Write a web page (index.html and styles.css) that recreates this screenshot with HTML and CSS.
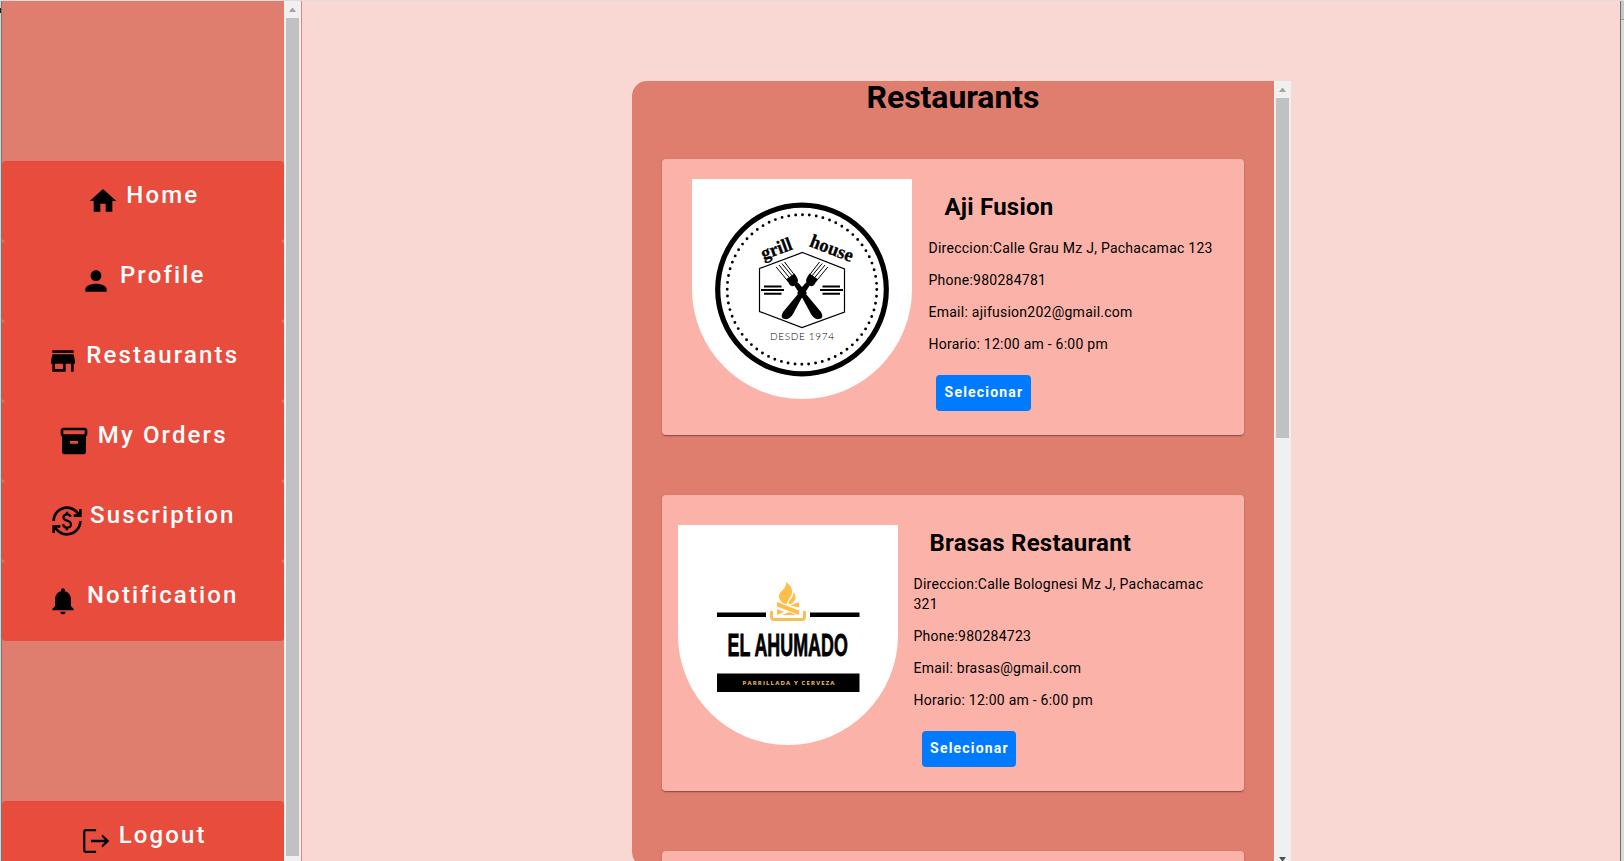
FILE: index.html
```html
<!DOCTYPE html>
<html lang="es">
<head>
<meta charset="utf-8">
<title>Restaurants</title>
<link rel="stylesheet" href="styles.css">
</head>
<body>
<div class="window">
  <div class="edge edge-left"><i class="speck"></i></div>
  <aside class="sidebar">
    <nav class="nav">
      <a class="nav-item"><svg class="icon" viewBox="0 0 24 24"><path d="M10 20v-6h4v6h5v-8h3L12 3 2 12h3v8z"/></svg><span class="label">Home</span></a>
      <a class="nav-item"><svg class="icon" viewBox="0 0 24 24"><path d="M12 12c2.21 0 4-1.79 4-4s-1.79-4-4-4-4 1.79-4 4 1.790 4 4 4zm0 2c-2.67 0-8 1.340-8 4v2h16v-2c0-2.660-5.330-4-8-4z"/></svg><span class="label">Profile</span></a>
      <a class="nav-item"><svg class="icon" viewBox="0 0 24 24"><path d="M20 4H4v2h16V4zm1 10v-2l-1-5H4l-1 5v2h1v6h10v-6h4v6h2v-6h1zm-9 4H6v-4h6v4z"/></svg><span class="label">Restaurants</span></a>
      <a class="nav-item"><svg class="icon" viewBox="0 0 24 24"><path d="M20 2H4c-1 0-2 .9-2 2v3.010c0 .72.43 1.340 1 1.690V20c0 1.100 1.100 2 2 2h14c.9 0 2-.9 2-2V8.700c.57-.35 1-.97 1-1.690V4c0-1.100-1-2-2-2zm-5 12H9v-2h6v2zm5-7H4V4h16v3z"/></svg><span class="label">My Orders</span></a>
      <a class="nav-item"><svg class="icon" viewBox="0 0 24 24"><path d="M12.89 11.1c-1.78-.59-2.64-.96-2.64-1.9 0-1.02 1.11-1.39 1.81-1.39 1.31 0 1.79.99 1.9 1.34l1.58-.67c-.15-.44-.82-1.91-2.66-2.23V5h-1.75v1.26c-2.6.56-2.62 2.85-2.62 2.96 0 2.27 2.25 2.91 3.35 3.31 1.58.56 2.28 1.07 2.28 2.03 0 1.13-1.05 1.61-1.98 1.61-1.82 0-2.34-1.87-2.4-2.09l-1.66.67c.63 2.19 2.28 2.78 2.9 2.96V19h1.75v-1.24c.52-.09 3.02-.59 3.02-3.22.01-1.39-.6-2.61-3-3.44zM3 21H1v-6h6v2H4.52c1.61 2.41 4.36 4 7.48 4 4.97 0 9-4.03 9-9h2c0 6.08-4.92 11-11 11-3.720 0-7.010-1.850-9-4.670V21zM1 12C1 5.920 5.920 1 12 1c3.720 0 7.010 1.850 9 4.670V3h2v6h-6V7h2.480C17.870 4.590 15.120 3 12 3c-4.970 0-9 4.030-9 9H1z"/></svg><span class="label">Suscription</span></a>
      <a class="nav-item"><svg class="icon" viewBox="0 0 24 24"><path d="M12 22c1.1 0 2-.9 2-2h-4c0 1.100.89 2 2 2zm6-6v-5c0-3.070-1.640-5.640-4.500-6.320V4c0-.83-.67-1.500-1.500-1.500s-1.500.67-1.500 1.500v.68C7.630 5.360 6 7.920 6 11v5l-2 2v1h16v-1l-2-2z"/></svg><span class="label">Notification</span></a>
    </nav>
    <a class="nav-item"><svg class="icon icon-line" viewBox="0 0 24 24"><path d="M12.800 3.800H5.300Q3.900 3.800 3.900 5.200V18.800Q3.900 20.200 5.300 20.200H12.800"/><path d="M9 12H21.700M17.300 7.900 21.500 12 17.300 16.100"/></svg><span class="label">Logout</span></a>
  </aside>
  <div class="scrollbar scrollbar-page"><i class="arrow"></i><i class="thumb"></i></div>
  <main class="main">
    <div class="frame">
      <section class="panel">
        <h1 class="title">Restaurants</h1>
        <article class="card card-first">
          <svg class="logo" viewBox="0 0 220 220">
            <circle cx="110" cy="110.500" r="84.300" fill="none" stroke="#000" stroke-width="5.200"/>
            <circle cx="110" cy="110.500" r="74.800" fill="none" stroke="#000" stroke-width="2.900" stroke-linecap="round" stroke-dasharray="0 6.910"/>
            <path d="M110.500 73.500 152.500 90V133L110 148.500 67.500 132.500V89.500Z" fill="none" stroke="#000" stroke-width="1.200"/>
            <g id="fork">
              <path d="M102 106 106 103.500 115 114 110 118.500Z"/>
              <path d="M94.500 100 102.500 94.500 105.500 99.500Q107 103.500 103.500 106 100 108.500 97.500 105.500Z"/>
              <path d="M84.200 88 96.500 103M87 86 98.500 100M89.800 84.500 101 98M92.500 83 104 98" fill="none" stroke="#000" stroke-width="1"/>
              <path d="M106.500 112 114 115 129 133Q132.500 139.500 127 140 122.500 141 119 135Z"/>
            </g>
            <use href="#fork" transform="matrix(-1 0 0 1 220 0)"/>
            <path d="M72 107.500H89.500M69 111H92M72 114.700H89.500M130.500 107.500H148M128 111H151M130.500 114.700H148" fill="none" stroke="#000" stroke-width="2"/>
            <g class="script">
              <text transform="translate(71.500 81) rotate(-20)" textLength="32" lengthAdjust="spacingAndGlyphs">grill</text>
              <text transform="translate(116.500 67) rotate(21)" textLength="45" lengthAdjust="spacingAndGlyphs">house</text>
            </g>
            <text class="since" x="78" y="161" textLength="64">DESDE 1974</text>
          </svg>
          <div class="info">
            <h2 class="name">Aji Fusion</h2>
            <p>Direccion:Calle Grau Mz J, Pachacamac 123</p>
            <p>Phone:980284781</p>
            <p>Email: ajifusion202@gmail.com</p>
            <p>Horario: 12:00 am - 6:00 pm</p>
            <button class="select">Selecionar</button>
          </div>
        </article>
        <article class="card card-second">
          <svg class="logo" viewBox="0 0 220 220">
            <path d="M39 89.700H88M132 89.700H181.500" stroke="#000" stroke-width="4.600"/>
            <g fill="#ffbd4a">
              <path d="M108 57C114 61 115.500 66 113 71 111 74 109 76 109 79 104 79 101 75 101 71 101 66 109 64 108 57Z"/>
              <path d="M115.500 67C119 71 118 76 113 79H110.500C110 75 116 73 115.500 67Z"/>
              <path d="M99 77 121 85.500V90L99 81.500ZM121 77V82.500L112 80.500ZM99 84 106 87 99 90ZM111 87 118 90H104Z"/>
            </g>
            <path d="M93.500 86V92Q93.500 94.500 96 94.500H124Q126.500 94.500 126.500 92V86" fill="none" stroke="#f8bf55" stroke-width="3"/>
            <text class="brand" transform="translate(49.500 130.800) scale(.576 1)" textLength="209">EL AHUMADO</text>
            <path d="M39 148.500H181.500V167H39Z"/>
            <text class="tag" x="64.500" y="160.300" textLength="92">PARRILLADA Y CERVEZA</text>
          </svg>
          <div class="info">
            <h2 class="name">Brasas Restaurant</h2>
            <p>Direccion:Calle Bolognesi Mz J, Pachacamac 321</p>
            <p>Phone:980284723</p>
            <p>Email: brasas@gmail.com</p>
            <p>Horario: 12:00 am - 6:00 pm</p>
            <button class="select">Selecionar</button>
          </div>
        </article>
        <article class="card card-next"></article>
      </section>
      <div class="scrollbar scrollbar-panel"><i class="arrow"></i><i class="thumb"></i><i class="arrow arrow-down"></i></div>
    </div>
  </main>
  <div class="edge edge-right"></div>
</div>
</body>
</html>
```
FILE: styles.css
```css
* { box-sizing: border-box; }
body { margin: 0; font-family: Roboto, sans-serif; color: #000; overflow: hidden; }
.window { display: flex; height: 861px; border-top: 1px solid #dddfdc; background: #f9d8d3; overflow: hidden; }
.edge { flex: none; background: #d3d3d3; }
.edge-left { width: 2px; border-right: 1px solid #777; padding-top: 7px; }
.speck { display: block; width: 1px; height: 5px; background: #222; }
.edge-right { width: 4px; border-left: 1px solid #707070; background: linear-gradient(#c8c8c8 18px, #999 18px, #999 19px, #dcdad7 19px); }

.sidebar { flex: none; width: 282px; background: #df7d6e; padding-top: 160px; }
.nav { margin-bottom: 160px; }
.nav-item { display: flex; justify-content: center; align-items: flex-start; height: 80px; padding-top: 16px; background: #e84c3d; border-radius: 4px; color: #fff; }
.icon { flex: none; width: 32px; height: 32px; margin: 8px 7.500px 0 0; fill: #000; }
.icon-line { fill: none; stroke: #000; stroke-width: 1.700; }
.label { font-size: 24px; font-weight: 500; line-height: 36px; letter-spacing: 2.140px; }

.scrollbar { flex: none; display: flex; flex-direction: column; align-items: center; width: 17px; background: #f0f0f0; }
.arrow { width: 7px; height: 4px; margin: 7px 0 6px; background: #a3a3a3; clip-path: polygon(3px 0, 4px 0, 7px 4px, 0 4px); }
.thumb { width: 13px; background: #c1c1c1; }
.scrollbar-page { width: 18px; border-right: 1px solid #e0867b; }
.scrollbar-page .thumb { height: 838px; }
.scrollbar-panel .thumb { height: 340px; }
.arrow-down { margin: auto 0 6px; background: #505050; transform: scaleY(-1); }

.main { flex: 1; display: flex; justify-content: center; align-items: flex-start; padding: 80px 0 0 1px; }
.frame { display: flex; width: 659px; height: 786px; border-radius: 15px 0 0 15px; overflow: hidden; flex: none; }
.panel { width: 642px; background: #df7d6e; padding: 0 30px; display: flex; flex-direction: column; }
.title { margin: 0 0 46px; font-size: 32px; line-height: 32px; font-weight: 700; letter-spacing: -.070px; text-align: center; }
.card { display: flex; flex: none; align-items: flex-start; border-radius: 4px; background: #fbb3a9; box-shadow: 0 2px 1px -1px rgba(0,0,0,.2), 0 1px 1px rgba(0,0,0,.14), 0 1px 3px rgba(0,0,0,.12); margin-bottom: 60px; }
.card-first { height: 276px; padding: 20px 30px; }
.card-second { height: 296px; padding: 30px 16px; }
.card-next { height: 276px; }
.logo { flex: none; width: 220px; height: 220px; background: #fff; border-radius: 0 0 110px 110px; }
.info { display: flex; flex-direction: column; align-items: flex-start; margin-left: 16.500px; }
.card-first .info { padding-top: 12px; }
.card-second .info { padding-top: 2px; margin-left: 15.500px; width: 300px; }
.name { margin: 0 0 15px 16px; font-size: 24px; line-height: 32px; font-weight: 700; letter-spacing: .220px; }
.info p { margin: 0 0 12px; font-size: 14px; line-height: 20px; letter-spacing: .250px; }
.select { margin: 9px 0 0 7.500px; width: 95px; height: 36px; padding: 0 0 1px 1px; border: 0; border-radius: 4px; background: #007bff; color: #fff; font: 700 14px/35px Roboto, sans-serif; letter-spacing: 1.200px; }
.card-second .select { margin-left: 8.500px; width: 94px; }
.script text { font: 700 19px "Liberation Serif", serif; stroke: #000; stroke-width: .300px; }
.since { font: 300 10px Lato, sans-serif; }
.brand { font: 700 31px "Liberation Sans", sans-serif; stroke: #000; stroke-width: .800px; }
.tag { font: 700 6px "Open Sans", sans-serif; fill: #f0c060; }
```
